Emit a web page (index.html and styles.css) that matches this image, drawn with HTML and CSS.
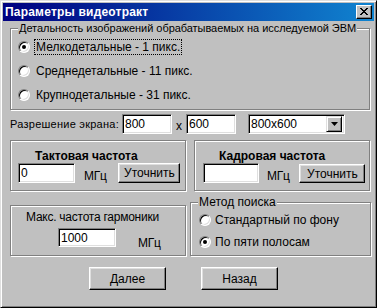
FILE: index.html
```html
<!DOCTYPE html>
<html>
<head>
<meta charset="utf-8">
<link rel="stylesheet" href="styles.css">
</head>
<body>
<div class="window">
  <div class="titlebar">
    <span class="title">Параметры видеотракт</span>
    <span class="close"><svg width="8" height="7" viewBox="0 0 8 7"><path d="M0 0h2v1h1v1h2v-1h1v-1h2v1h-1v1h-1v1h-1v1h1v1h1v1h1v1h-2v-1h-1v-1h-2v1h-1v1h-2v-1h1v-1h1v-1h1v-1h-1v-1h-1v-1h-1z" fill="#000"/></svg></span>
  </div>
  <div class="content">
    <div class="group g1">
      <span class="legend l1">Детальность изображений обрабатываемых на исследуемой ЭВМ</span>
      <div class="radio-row"><span class="radio checked"></span><span class="rlabel focus">Мелкодетальные - 1 пикс.</span></div>
      <div class="radio-row"><span class="radio"></span><span class="rlabel">Среднедетальные - 11 пикс.</span></div>
      <div class="radio-row"><span class="radio"></span><span class="rlabel">Крупнодетальные - 31 пикс.</span></div>
    </div>
    <div class="res-row">
      <span class="res-label">Разрешение экрана:</span>
      <span class="field w50">800</span>
      <span class="times">x</span>
      <span class="field w50">600</span>
      <span class="combo"><span class="combo-text">800x600</span><span class="combo-btn"><svg width="7" height="4" viewBox="0 0 7 4"><path d="M0 0h7l-3.5 4z" fill="#000"/></svg></span></span>
    </div>
    <div class="freq-row">
      <div class="etched g2">
        <div class="btitle t2">Тактовая частота</div>
        <div class="inrow">
          <span class="field f2">0</span>
          <span class="unit u2">МГц</span>
          <span class="button b2">Уточнить</span>
        </div>
      </div>
      <div class="etched g3">
        <div class="btitle t3">Кадровая частота</div>
        <div class="inrow">
          <span class="field f3"></span>
          <span class="unit u3">МГц</span>
          <span class="button b3">Уточнить</span>
        </div>
      </div>
    </div>
    <div class="bottom-row">
      <div class="etched g4">
        <div class="mtitle">Макс. частота гармоники</div>
        <div class="inrow4">
          <span class="field f4">1000</span>
          <span class="unit u4">МГц</span>
        </div>
      </div>
      <div class="group g5">
        <span class="legend l5">Метод поиска</span>
        <div class="radio-row r5"><span class="radio"></span><span class="rlabel">Стандартный по фону</span></div>
        <div class="radio-row r5"><span class="radio checked"></span><span class="rlabel">По пяти полосам</span></div>
      </div>
    </div>
    <div class="btn-row">
      <span class="button big">Далее</span>
      <span class="button big">Назад</span>
    </div>
  </div>
</div>
</body>
</html>
```

FILE: styles.css
```css
* { box-sizing: border-box; }
html, body { margin: 0; padding: 0; background: #c0c0c0; }
body {
  font-family: "Liberation Sans", Arial, sans-serif;
  font-size: 12px;
  color: #000;
  white-space: nowrap;
}
.window {
  width: 377px;
  height: 308px;
  background: #c0c0c0;
  border-top: 1px solid #dfdfdf;
  border-left: 1px solid #dfdfdf;
  border-right: 1px solid #000;
  border-bottom: 1px solid #000;
  box-shadow: inset 1px 1px #fff, inset -1px -1px #808080;
  padding: 2px;
}
.titlebar {
  height: 18px;
  background: linear-gradient(to right, #000080, #1084d0);
  display: flex;
  align-items: center;
  justify-content: space-between;
  padding: 0 2px 0 2px;
}
.title {
  color: #fff;
  font-weight: bold;
  font-size: 12px;
  letter-spacing: 0.2px;
}
.close {
  width: 16px;
  height: 14px;
  background: #c0c0c0;
  border-top: 1px solid #fff;
  border-left: 1px solid #fff;
  border-right: 1px solid #000;
  border-bottom: 1px solid #000;
  box-shadow: inset -1px -1px #808080;
  display: flex;
  align-items: center;
  justify-content: center;
  padding-bottom: 1px;
}
.close svg { display: block; }
.content {
  padding-left: 7px;
  padding-right: 3px;
}
.group {
  position: relative;
  border: 1px solid #808080;
  box-shadow: inset 1px 1px #fff, 1px 1px #fff;
}
.legend {
  position: absolute;
  top: -8px;
  left: 7px;
  background: #c0c0c0;
  padding: 0 1px 0 1px;
  line-height: 14px;
}
.l1 { font-size: 11px; letter-spacing: -0.05px; }
.g1 {
  margin-top: 7px;
  height: 82px;
  width: 360px;
  padding-top: 6px;
  padding-left: 7px;
}
.radio-row {
  display: flex;
  align-items: center;
  height: 24px;
}
.radio {
  width: 12px;
  height: 12px;
  border-radius: 50%;
  background: #fff;
  border-top: 1px solid #808080;
  border-left: 1px solid #808080;
  border-right: 1px solid #fff;
  border-bottom: 1px solid #fff;
  box-shadow: inset 1px 1px #000, inset -1px -1px #dfdfdf;
  position: relative;
  flex: none;
}
.radio.checked::after {
  content: "";
  position: absolute;
  left: 3px;
  top: 3px;
  width: 4px;
  height: 4px;
  border-radius: 50%;
  background: #000;
}
.rlabel {
  line-height: 14px;
  padding: 0 1px;
  margin-left: 4px;
  border: 1px solid transparent;
}
.rlabel.focus { border: 1px dotted #000; }
.res-row {
  margin-top: 4px;
  height: 20px;
  display: flex;
  align-items: center;
}
.res-label { width: 112px; flex: none; font-size: 11px; letter-spacing: 0.25px; }
.field {
  height: 20px;
  background: #fff;
  border-top: 1px solid #808080;
  border-left: 1px solid #808080;
  border-right: 1px solid #fff;
  border-bottom: 1px solid #fff;
  box-shadow: inset 1px 1px #000, inset -1px -1px #dfdfdf;
  padding: 2px 0 0 2px;
  line-height: 14px;
  display: block;
  flex: none;
}
.w50 { width: 50px; }
.times { width: 14px; text-align: center; margin-top: 4px; flex: none; }
.combo {
  margin-left: 12px;
  width: 97px;
  height: 20px;
  background: #fff;
  border-top: 1px solid #808080;
  border-left: 1px solid #808080;
  border-right: 1px solid #fff;
  border-bottom: 1px solid #fff;
  box-shadow: inset 1px 1px #000, inset -1px -1px #dfdfdf;
  display: flex;
  align-items: center;
  padding: 2px 2px 2px 2px;
  flex: none;
}
.combo-text { flex: 1; line-height: 14px; }
.combo-btn {
  width: 16px;
  height: 16px;
  background: #c0c0c0;
  border-top: 1px solid #dfdfdf;
  border-left: 1px solid #dfdfdf;
  border-right: 1px solid #000;
  border-bottom: 1px solid #000;
  box-shadow: inset 1px 1px #fff, inset -1px -1px #808080;
  display: flex;
  align-items: center;
  justify-content: center;
}
.combo-btn svg { display: block; }
.etched {
  border: 1px solid #808080;
  box-shadow: inset 1px 1px #fff, 1px 1px #fff;
}
.freq-row {
  margin-top: 6px;
  display: flex;
  gap: 8px;
}
.g2 { width: 176px; height: 51px; padding-left: 7px; }
.g3 { width: 176px; height: 51px; padding-left: 8px; }
.btitle {
  font-weight: bold;
  font-size: 12px;
  line-height: 15px;
  margin-top: 8px;
  letter-spacing: 0;
}
.t2 { padding-left: 17px; }
.t3 { padding-left: 16px; }
.inrow {
  display: flex;
  align-items: flex-start;
  margin-top: -1px;
}
.f2 { width: 57px; }
.f3 { width: 56px; }
.unit { line-height: 14px; margin-top: 6px; letter-spacing: -0.3px; }
.u2 { margin-left: 9px; }
.u3 { margin-left: 8px; }
.button {
  display: flex;
  align-items: center;
  justify-content: center;
  background: #c0c0c0;
  border-top: 1px solid #fff;
  border-left: 1px solid #fff;
  border-right: 1px solid #000;
  border-bottom: 1px solid #000;
  box-shadow: inset -1px -1px #808080, inset 1px 1px #dfdfdf;
  line-height: 14px;
  flex: none;
}
.b2 { width: 62px; height: 20px; margin-left: 12px; }
.b3 { width: 66px; height: 19px; margin-left: 10px; margin-top: 1px; }
.bottom-row {
  margin-top: 11px;
  display: flex;
  align-items: flex-start;
  gap: 4px;
}
.g4 { width: 176px; height: 51px; margin-top: 3px; }
.mtitle { margin-top: 4px; padding-left: 15px; line-height: 14px; letter-spacing: -0.25px; }
.inrow4 { display: flex; margin-top: 4px; padding-left: 47px; }
.f4 { width: 58px; height: 19px; }
.u4 { margin-left: 22px; margin-top: 8px; }
.g5 { width: 181px; height: 54px; padding-top: 6px; padding-left: 8px; }
.l5 { left: 7px; }
.r5 { height: 22px; }
.r5 .rlabel { margin-left: 2px; }
.btn-row {
  margin-top: 11px;
  display: flex;
  gap: 35px;
  padding-left: 79px;
}
.big { width: 77px; height: 23px; }
```
